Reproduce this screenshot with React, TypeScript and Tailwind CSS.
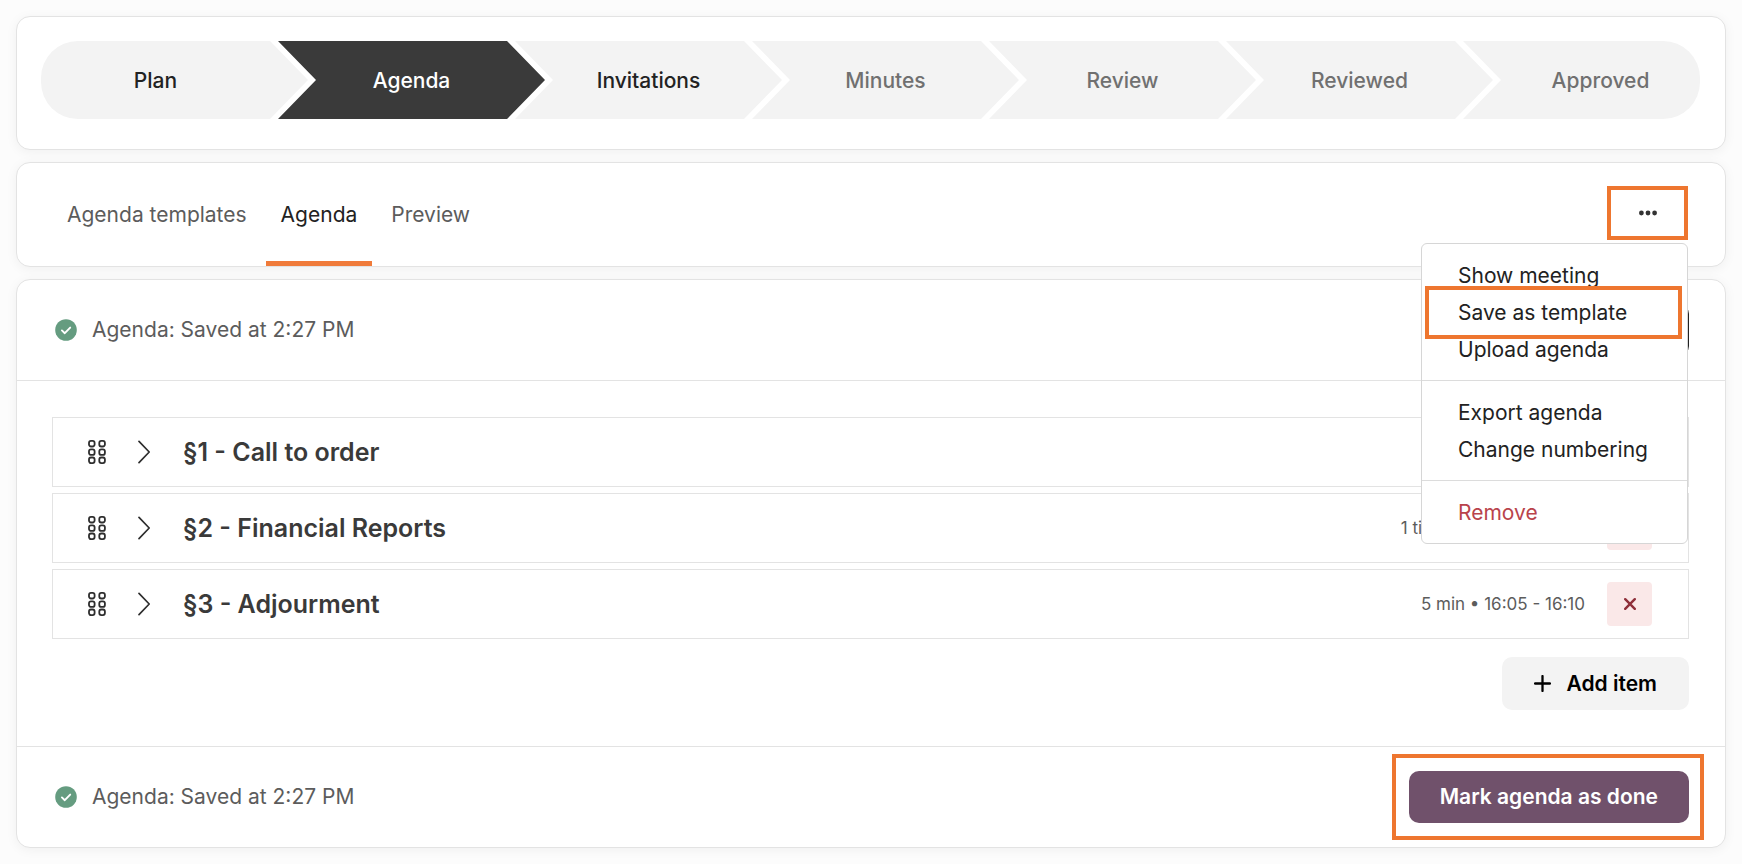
import clsx from 'clsx';

type StepState = 'available' | 'current' | 'upcoming';

const steps: { label: string; state: StepState }[] = [
  { label: 'Plan', state: 'available' },
  { label: 'Agenda', state: 'current' },
  { label: 'Invitations', state: 'available' },
  { label: 'Minutes', state: 'upcoming' },
  { label: 'Review', state: 'upcoming' },
  { label: 'Reviewed', state: 'upcoming' },
  { label: 'Approved', state: 'upcoming' },
];

const tabs = ['Agenda templates', 'Agenda', 'Preview'];

const agendaItems = [
  { title: '§1 - Call to order', meta: '5 min • 15:10 - 15:15' },
  { title: '§2 - Financial Reports', meta: '1 timme • 15:05 - 16:05' },
  { title: '§3 - Adjourment', meta: '5 min • 16:05 - 16:10' },
];

const menuGroups = [
  ['Show meeting', 'Save as template', 'Upload agenda'],
  ['Export agenda', 'Change numbering'],
  ['Remove'],
];

const card = 'rounded-[14px] border border-[#e3e3e3] bg-white shadow-[0_2px_12px_rgba(0,0,0,0.05)]';

function Stepper() {
  return (
    <nav aria-label="Meeting progress" className={clsx(card, 'pt-6 pr-[25px] pb-[30px] pl-6')}>
      <ol className="grid grid-cols-7">
        {steps.map(({ label, state }, i) => {
          const first = i === 0;
          const last = i === steps.length - 1;
          return (
            <li key={label} className={clsx('flex', !last && '-mr-[30px]')}>
              <button
                type="button"
                aria-current={state === 'current' ? 'step' : undefined}
                className={clsx(
                  'h-[78px] flex-1 pt-0.5 text-[21px] font-medium',
                  state === 'current' && 'bg-[#3a3a3a] text-white',
                  state === 'available' && 'bg-[#f3f3f3] text-[#222222]',
                  state === 'upcoming' && 'bg-[#f3f3f3] text-[#707070]',
                  first &&
                    'rounded-l-[37px] pr-[38px] [clip-path:polygon(0_0,calc(100%-38px)_0,100%_50%,calc(100%-38px)_100%,0_100%)]',
                  last && 'rounded-r-[37px] pl-[38px] [clip-path:polygon(0_0,100%_0,100%_100%,0_100%,38px_50%)]',
                  !first &&
                    !last &&
                    '[clip-path:polygon(0_0,calc(100%-38px)_0,100%_50%,calc(100%-38px)_100%,0_100%,38px_50%)]',
                )}
              >
                {label}
              </button>
            </li>
          );
        })}
      </ol>
    </nav>
  );
}

function ActionsMenu() {
  return (
    <div className="relative">
      <button
        type="button"
        aria-label="More actions"
        aria-expanded="true"
        className="flex h-[54px] w-[81px] items-center justify-center border-4 border-[#ee762f] text-[#333333]"
      >
        <svg width="18" height="6" viewBox="0 0 18 6" fill="currentColor" aria-hidden="true">
          <circle cx="2.4" cy="3" r="2.4" />
          <circle cx="9" cy="3" r="2.4" />
          <circle cx="15.6" cy="3" r="2.4" />
        </svg>
      </button>
      <div
        role="menu"
        className="absolute top-full right-0 z-10 mt-[3px] w-[267px] divide-y divide-[#dcdcdc] rounded-md border border-[#d6d6d6] bg-white"
      >
        {menuGroups.map((group) => (
          <div key={group[0]} role="group" className="pt-[13px] pb-3">
            {group.map((item) => (
              <button
                key={item}
                type="button"
                role="menuitem"
                className={clsx(
                  'relative flex h-[37px] w-full items-center px-9 text-[21px]',
                  item === 'Remove' ? 'text-[#b9434b]' : 'text-[#222222]',
                )}
              >
                {item}
                {item === 'Save as template' && (
                  <span className="absolute -inset-y-2 right-[5px] left-[3px] border-4 border-[#ee762f]" />
                )}
              </button>
            ))}
          </div>
        ))}
      </div>
    </div>
  );
}

function TabBar() {
  return (
    <div className={clsx(card, 'flex h-[105px] items-stretch justify-between pr-[37px] pl-[35px]')}>
      <div role="tablist" className="flex items-stretch gap-1">
        {tabs.map((tab) => {
          const selected = tab === 'Agenda';
          return (
            <button
              key={tab}
              type="button"
              role="tab"
              aria-selected={selected}
              className={clsx(
                'border-y-[5px] border-t-transparent px-[15px] text-[21px]',
                selected ? 'border-b-[#f07b3a] text-[#222222]' : 'border-b-transparent text-[#5c5c5c]',
              )}
            >
              {tab}
            </button>
          );
        })}
      </div>
      <div className="flex items-start pt-[23px]">
        <ActionsMenu />
      </div>
    </div>
  );
}

function SavedStatus() {
  return (
    <p className="flex items-center gap-[15px] text-[21px] text-[#5c5c5c]">
      <svg width="22" height="22" viewBox="0 0 22 22" aria-hidden="true">
        <circle cx="11" cy="11" r="10.8" fill="#659c80" />
        <path d="m6.9 11.4 2.9 2.8 5.4-5.6" fill="none" stroke="#fff" strokeWidth="1.9" strokeLinecap="round" strokeLinejoin="round" />
      </svg>
      Agenda: Saved at 2:27 PM
    </p>
  );
}

function DragIcon() {
  return (
    <svg width="18" height="24" viewBox="0 0 18 24" fill="none" stroke="#2e2e2e" strokeWidth="1.8" aria-hidden="true">
      {[0.9, 9.3, 17.5].map((y) => (
        <g key={y}>
          <rect x="1" y={y} width="5.6" height="5.6" rx="2" />
          <rect x="11.3" y={y} width="5.6" height="5.6" rx="2" />
        </g>
      ))}
    </svg>
  );
}

function AgendaRow({ title, meta }: { title: string; meta: string }) {
  return (
    <li className="flex h-[70px] items-center border border-[#e3e3e3] pr-9 pl-[35px]">
      <button type="button" aria-label={`Move ${title}`}>
        <DragIcon />
      </button>
      <button type="button" aria-label={`Expand ${title}`} className="ml-8">
        <svg width="12" height="24" viewBox="0 0 12 24" fill="none" stroke="#2e2e2e" strokeWidth="1.7" strokeLinecap="round" strokeLinejoin="round" aria-hidden="true">
          <path d="M1 1.4 11.2 12 1 22.6" />
        </svg>
      </button>
      <h2 className="ml-[33px] flex-1 pt-0.5 text-[25px] font-semibold text-[#3a3a3a]">{title}</h2>
      <span className="pt-0.5 text-[17px] text-[#5c5c5c]">{meta}</span>
      <button
        type="button"
        aria-label={`Delete ${title}`}
        className="ml-[22px] flex h-11 w-[45px] items-center justify-center rounded bg-[#fae8e8] text-[#8f2f3a]"
      >
        <svg width="12" height="12" viewBox="0 0 12 12" fill="none" stroke="currentColor" strokeWidth="2.4" strokeLinecap="round" aria-hidden="true">
          <path d="m1.2 1.2 9.6 9.6M10.8 1.2 1.2 10.8" />
        </svg>
      </button>
    </li>
  );
}

export default function App() {
  return (
    <main className="flex min-h-screen flex-col gap-3 bg-[#fcfcfc] p-4 font-['Inter','Liberation_Sans',sans-serif]">
      <Stepper />
      <TabBar />
      <section className={card}>
        <header className="flex h-[101px] items-center justify-between border-b border-[#e3e3e3] pr-9 pl-[38px]">
          <SavedStatus />
          <button
            type="button"
            className="h-[52px] rounded-[10px] border border-[#222222] px-8 text-[21px] font-semibold text-[#222222]"
          >
            Preview
          </button>
        </header>
        <div className="px-9 pt-9 pb-9">
          <ul className="-ml-px flex flex-col gap-[6px]">
            {agendaItems.map((item) => (
              <AgendaRow key={item.title} {...item} />
            ))}
          </ul>
          <div className="mt-[18px] flex justify-end">
            <button
              type="button"
              className="flex h-[53px] items-center gap-4 rounded-[10px] bg-[#f3f3f3] px-8 text-[21px] font-semibold text-black"
            >
              <svg width="17" height="17" viewBox="0 0 17 17" fill="none" stroke="currentColor" strokeWidth="2.3" strokeLinecap="round" aria-hidden="true">
                <path d="M8.5 1.1v14.8M1.1 8.5h14.8" />
              </svg>
              Add item
            </button>
          </div>
        </div>
        <footer className="flex h-[101px] items-center justify-between border-t border-[#e3e3e3] pr-[21px] pl-[38px]">
          <SavedStatus />
          <div className="border-4 border-[#ee762f] py-[13px] pr-[11px] pl-[13px]">
            <button
              type="button"
              className="h-[52px] rounded-[10px] bg-[#70516b] px-[31px] text-[21px] font-semibold text-white"
            >
              Mark agenda as done
            </button>
          </div>
        </footer>
      </section>
    </main>
  );
}
